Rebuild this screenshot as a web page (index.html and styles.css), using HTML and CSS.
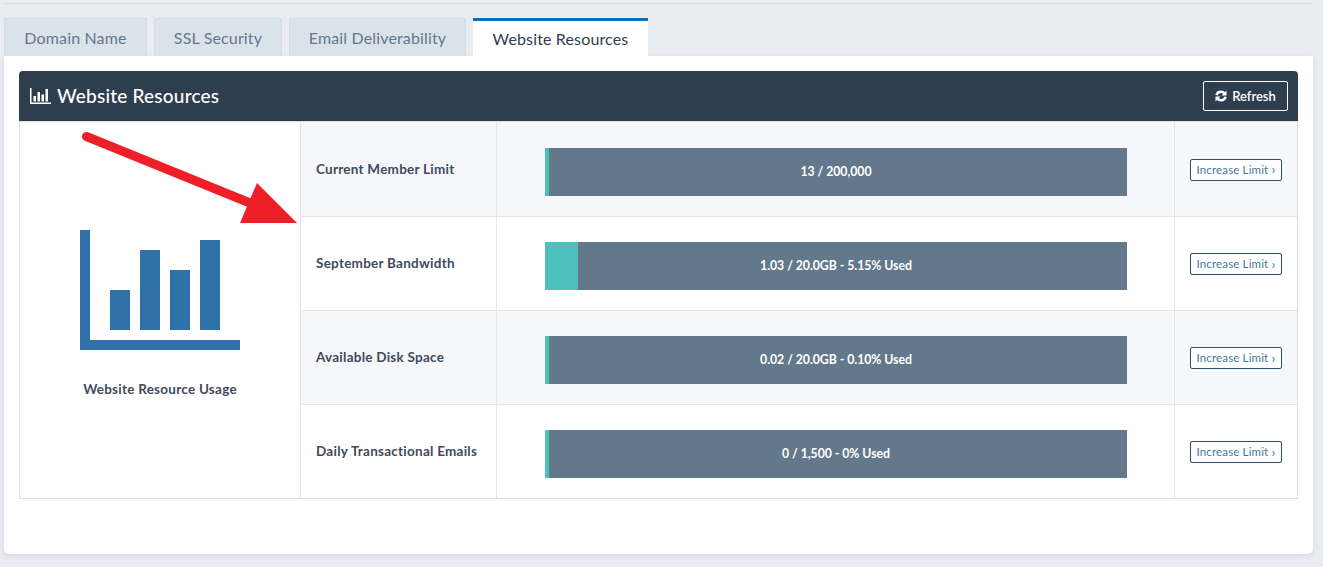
FILE: index.html
```html
<!DOCTYPE html>
<html lang="en">
<head>
<meta charset="utf-8">
<title>Website Resources</title>
<link rel="stylesheet" href="styles.css">
</head>
<body>
<div class="page">
  <div class="tabs">
    <a class="tab tab-domain">Domain Name</a>
    <a class="tab tab-ssl">SSL Security</a>
    <a class="tab tab-email">Email Deliverability</a>
    <a class="tab tab-active">Website Resources</a>
  </div>
  <section class="panel">
    <header class="panel-head">
      <h2 class="panel-title">
        <svg class="title-icon" viewBox="0 0 21 16" width="21" height="16" aria-hidden="true"><path fill="#fff" d="M0 0h1.500v14.500H21V16H0zM3.500 8h2.500v5.500H3.500zM7.500 4h2.500v9.500H7.500zM11.500 6.500h2.500v7H11.500zM15.500 1h2.500v12.500h-2.500z"/></svg>
        <span class="title-text">Website Resources</span>
      </h2>
      <button class="refresh">
        <svg class="refresh-icon" viewBox="0 0 24 24" width="12" height="12" aria-hidden="true"><path fill="none" stroke="#fff" stroke-width="5" d="M3 10.500C4 6 7.500 3.500 12 3.500c3 0 5.500 1.500 7 3.500M21 13.500c-1 4.500-4.500 7-9 7-3 0-5.500-1.500-7-3.500"/><path fill="#fff" d="M23 1v10h-10zM1 23V13h10z"/></svg>
        Refresh
      </button>
    </header>
    <div class="resources">
      <div class="summary">
        <svg class="summary-icon" viewBox="0 0 160 120" width="160" height="120" aria-hidden="true"><path fill="#3070a9" d="M0 0h10v110h150v10H0zM30 60h20v40H30zM60 20h20v80H60zM90 40h20v60H90zM120 10h20v90h-20z"/></svg>
        <p class="summary-label">Website Resource Usage</p>
      </div>
      <div class="rows">
        <div class="row row-alt">
          <div class="cell-name">Current Member Limit</div>
          <div class="cell-bar"><div class="bar"><div class="bar-fill" style="width:4px"></div><span class="bar-text">13 / 200,000</span></div></div>
          <div class="cell-action"><a class="increase">Increase Limit <span class="chev">›</span></a></div>
        </div>
        <div class="row">
          <div class="cell-name">September Bandwidth</div>
          <div class="cell-bar"><div class="bar"><div class="bar-fill" style="width:33px"></div><span class="bar-text">1.03 / 20.0GB - 5.15% Used</span></div></div>
          <div class="cell-action"><a class="increase">Increase Limit <span class="chev">›</span></a></div>
        </div>
        <div class="row row-alt">
          <div class="cell-name">Available Disk Space</div>
          <div class="cell-bar"><div class="bar"><div class="bar-fill" style="width:4px"></div><span class="bar-text">0.02 / 20.0GB - 0.10% Used</span></div></div>
          <div class="cell-action"><a class="increase">Increase Limit <span class="chev">›</span></a></div>
        </div>
        <div class="row">
          <div class="cell-name">Daily Transactional Emails</div>
          <div class="cell-bar"><div class="bar"><div class="bar-fill" style="width:4px"></div><span class="bar-text">0 / 1,500 - 0% Used</span></div></div>
          <div class="cell-action"><a class="increase">Increase Limit <span class="chev">›</span></a></div>
        </div>
      </div>
    </div>
  </section>
  <svg class="arrow" viewBox="0 0 240 100" width="240" height="100" aria-hidden="true"><path fill="none" stroke="#ee1f26" stroke-width="9" stroke-linecap="round" d="M4.500 4.500L168 71"/><path fill="#ee1f26" d="M175 51L215 91H158z"/></svg>
</div>
</body>
</html>
```
FILE: styles.css
```css
* { box-sizing: border-box; }
html, body { margin: 0; height: 567px; overflow: hidden; }
body {
  background: #e9edf2;
  font-family: "Lato", "Noto Sans", sans-serif;
  color: #3f4b5b;
}
.page {
  position: relative;
  margin: 3px 10px 0 4px;
  border-top: 1px solid #d8dde2;
  padding-top: 14px;
}
.tabs { display: flex; gap: 7px; height: 38px; }
.tab {
  display: flex;
  align-items: center;
  justify-content: center;
  background: #dbe3ea;
  border: 1px solid #d0dbe4;
  border-bottom: 0;
  color: #65778b;
  font-size: 16px;
  letter-spacing: 0.15px;
}
.tab-domain { width: 143px; }
.tab-ssl { width: 128px; }
.tab-email { width: 177px; }
.tab-active {
  width: 175px;
  background: #fff;
  border: 0;
  border-top: 3px solid #0070bf;
  color: #2f3e4e;
}
.panel {
  height: 498px;
  background: #fff;
  border-radius: 0 0 5px 5px;
  box-shadow: 0 2px 5px rgba(60, 75, 95, 0.13);
  padding: 15px;
}
.panel-head {
  display: flex;
  align-items: center;
  justify-content: space-between;
  height: 50px;
  background: #2f3e4f;
  border-radius: 4px 4px 0 0;
  padding: 0 10px 0 11px;
}
.panel-title {
  display: flex;
  align-items: center;
  gap: 6px;
  margin: 0;
  color: #fff;
  font-size: 19px;
  font-weight: 500;
  letter-spacing: 0.2px;
}
.title-text { padding-bottom: 2px; }
.title-icon { display: block; }
.refresh {
  display: flex;
  align-items: center;
  justify-content: center;
  gap: 5px;
  width: 85px;
  height: 30px;
  background: transparent;
  border: 1px solid #fff;
  border-radius: 2px;
  color: #fff;
  font: 600 13px "Lato", sans-serif;
}
.resources {
  display: flex;
  height: 378px;
  border: 1px solid #dcdee0;
}
.summary {
  width: 281px;
  flex: none;
  border-right: 1px solid #e2e4e6;
  padding: 108px 0 0 60px;
}
.summary-icon { display: block; }
.summary-label {
  margin: 31px 0 0 -60px;
  text-align: center;
  font-size: 13.500px;
  font-weight: 700;
  letter-spacing: 0.25px;
  line-height: 16px;
}
.rows { flex: 1; display: flex; flex-direction: column; }
.row {
  height: 94px;
  flex: none;
  display: flex;
}
.row + .row { border-top: 1px solid #e3e5e8; }
.row + .row .cell-name { padding-bottom: 2px; }
.row-alt { background: #f5f7fa; }
.cell-name {
  width: 196px;
  flex: none;
  display: flex;
  align-items: center;
  padding: 0 0 0 15px;
  border-right: 1px solid #e6e7e9;
  font-size: 13.500px;
  font-weight: 700;
  letter-spacing: 0.25px;
}
.cell-bar {
  width: 678px;
  flex: none;
  display: flex;
  align-items: center;
  padding: 5px 47px 0 48px;
  border-right: 1px solid #e6e7e9;
}
.bar {
  position: relative;
  width: 100%;
  height: 48px;
  background: #64788c;
}
.bar-fill { height: 100%; background: #4dbfbc; }
.bar-text {
  position: absolute;
  inset: 0 0 1px;
  display: flex;
  align-items: center;
  justify-content: center;
  color: #fff;
  font-size: 12.300px;
  font-weight: 700;
  letter-spacing: -0.05px;
}
.cell-action {
  flex: 1;
  display: flex;
  align-items: center;
  justify-content: center;
  padding-top: 1px;
}
.increase {
  display: flex;
  align-items: center;
  justify-content: center;
  gap: 3px;
  width: 92px;
  height: 22px;
  padding-bottom: 1px;
  background: #fff;
  border: 1px solid #2d4e72;
  border-radius: 2px;
  color: #45789f;
  font-size: 11.500px;
  letter-spacing: 0.15px;
}
.chev { font-size: 14px; line-height: 14px; }
.arrow {
  position: absolute;
  left: 78px;
  top: 128px;
}
```
